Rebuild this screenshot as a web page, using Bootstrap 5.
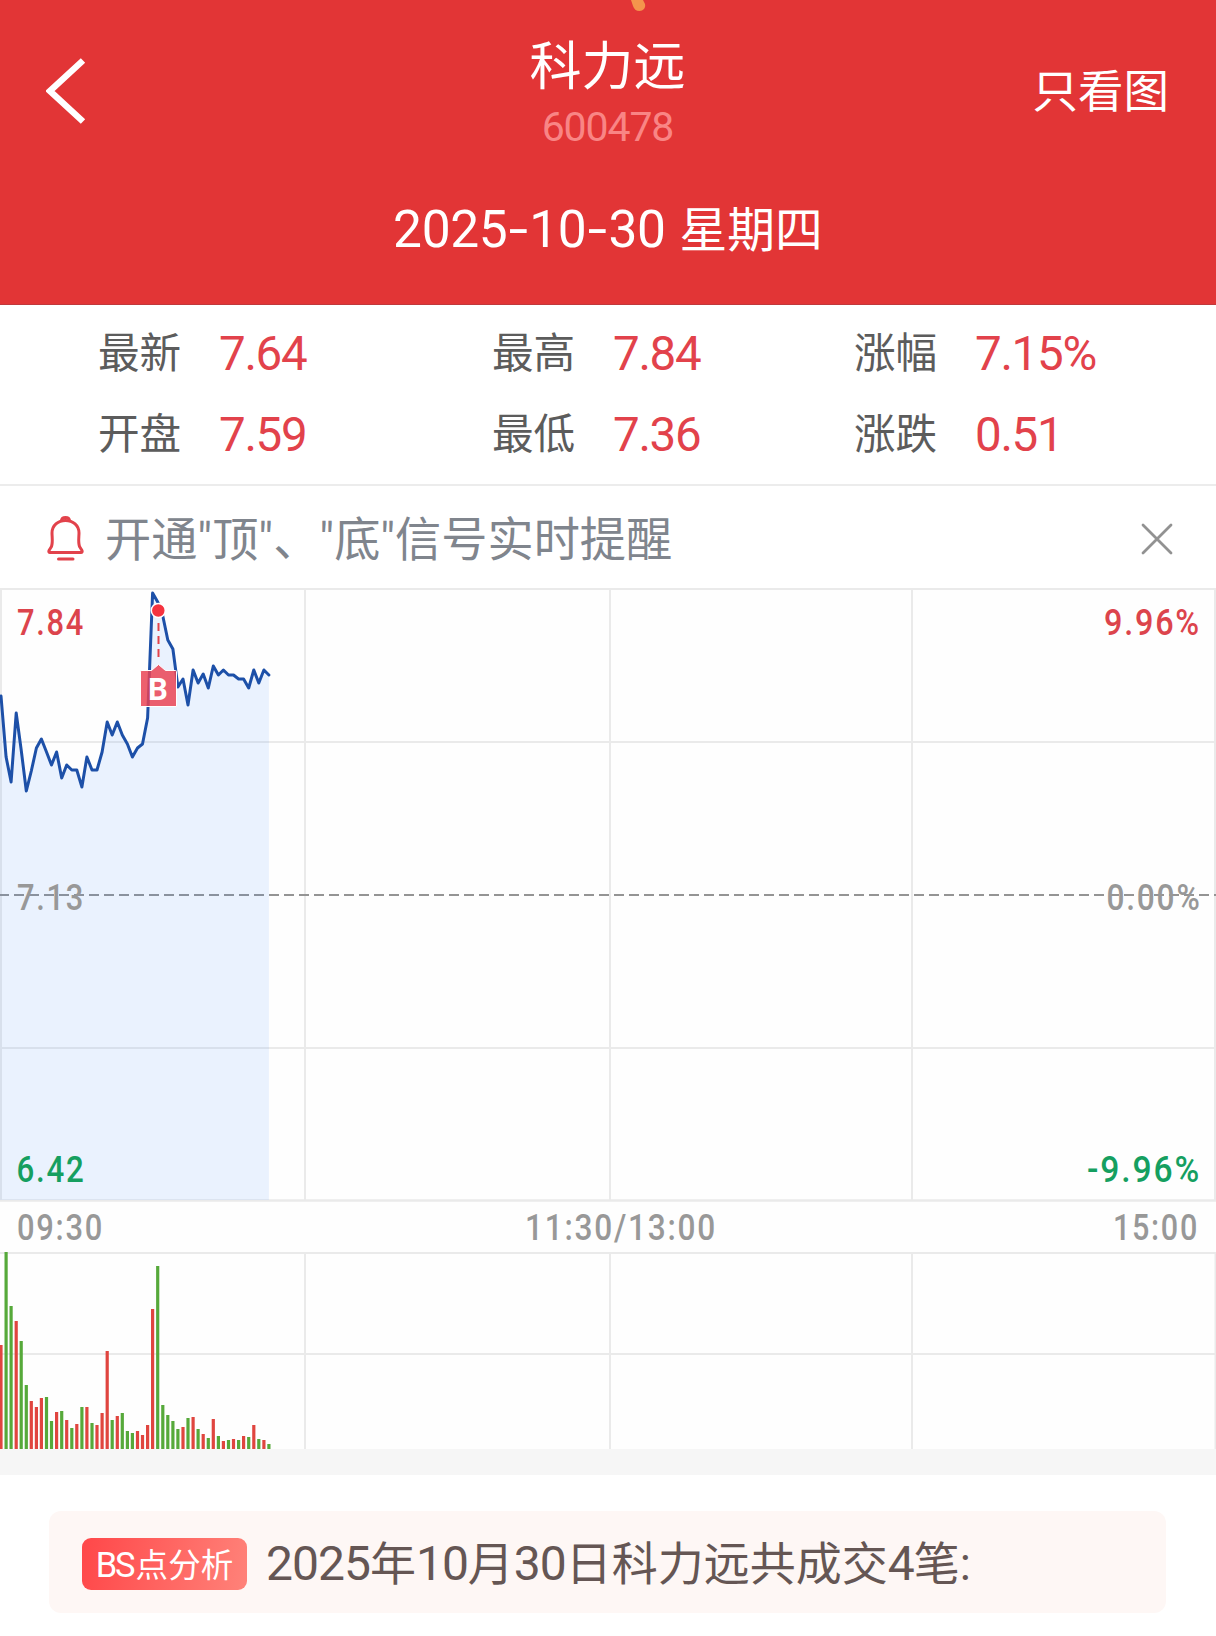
<!DOCTYPE html>
<html lang="zh-CN">
<head>
<meta charset="utf-8">
<meta name="viewport" content="width=device-width, initial-scale=1">
<title>科力远 600478</title>
<link href="https://cdn.jsdelivr.net/npm/bootstrap@5.3.0/dist/css/bootstrap.min.css" rel="stylesheet">
<style>
  body { font-family: Roboto, "Noto Sans CJK SC", sans-serif; background: #fff; overflow-x: hidden; }
  .app-head { background: #e23536; height: 305px; color: #fff; border-bottom: 1px solid #c0393c; }
  .head-top { height: 172px; padding: 0 47px 0 46px; }
  .head-side { width: 240px; height: 182px; }
  .stock-name { font-size: 52px; line-height: 60px; padding-top: 38px; }
  .stock-code { font-size: 41px; line-height: 48px; letter-spacing: -1.1px; color: #f98585; margin-top: 5px; }
  .only-chart { font-size: 45.5px; line-height: 60px; padding-top: 4px; }
  .trade-date { font-size: 51.5px; line-height: 60px; padding-top: 28px; }
  .trade-date .day-num { letter-spacing: -.4px; }
  .trade-date .dash { display: inline-block; width: 22px; text-align: center; transform: scaleX(1.35); }
  .trade-date .weekday { font-size: 47.8px; margin-left: 14px; }
  .drop { top: 0; left: 631px; }
  .quotes { height: 181px; padding: 9px 0 0 98px; border-bottom: 2px solid #ececec; }
  .quotes .q-line { height: 81px; }
  .q-cell { width: 394px; }
  .q-cell.second { width: 362px; }
  .q-label { font-size: 41.6px; width: 121px; color: #5c5c5c; line-height: 81px; margin-top: -1px; }
  .q-value { font-size: 47.5px; color: #e2424b; line-height: 81px; letter-spacing: -1.3px; }
  .notice { height: 102px; padding: 3px 43px 0 47px; color: #80858d; }
  .notice .msg { font-size: 46.2px; line-height: 60px; padding: 3px 0 0 20px; white-space: nowrap; }
  .chart { display: block; }
  .chart text { font-family: Roboto, sans-serif; font-size: 36px; font-weight: 500; letter-spacing: 2px; }
  .chart .flag { font-size: 31px; font-weight: 700; letter-spacing: 0; }
  .band { height: 26px; background: #f6f6f6; }
  .analysis { margin: 36px 50px 0 49px; height: 102px; border-radius: 12px; background: #fef7f5; padding: 4px 0 0 33px; }
  .bs-tag { width: 165px; height: 52px; border-radius: 9px; background: linear-gradient(100deg, #ff4749, #ff8279); color: #fff; font-size: 32.6px; line-height: 54px; }
  .bs-tag .lat { font-size: 34.5px; letter-spacing: -2px; margin-right: 2px; }
  .summary { font-size: 46px; line-height: 60px; color: #655654; padding-left: 19px; white-space: nowrap; }
  .summary .num { font-size: 48px; letter-spacing: -1px; }
</style>
</head>
<body>
<header class="app-head position-relative">
  <svg class="drop position-absolute" width="15" height="12" viewBox="0 0 15 12"><path d="M0 0H12L14 4C15 8 12 11 8.500 11C5 11 3 9 2 6Z" fill="#f4944c"/></svg>
  <div class="head-top d-flex justify-content-between">
    <div class="head-side d-flex align-items-center">
      <svg width="40" height="68" viewBox="0 0 40 68"><path d="M37 3.500L4 34L37 64.500" fill="none" stroke="#fff" stroke-width="6.400"/></svg>
    </div>
    <div class="text-center">
      <div class="stock-name">科力远</div>
      <div class="stock-code">600478</div>
    </div>
    <div class="head-side d-flex align-items-center justify-content-end only-chart">只看图</div>
  </div>
  <div class="trade-date text-center"><span class="day-num">2025<span class="dash">-</span>10<span class="dash">-</span>30</span><span class="weekday">星期四</span></div>
</header>

<section class="quotes">
  <div class="q-line d-flex">
    <div class="q-cell d-flex"><span class="q-label">最新</span><span class="q-value">7.64</span></div>
    <div class="q-cell second d-flex"><span class="q-label">最高</span><span class="q-value">7.84</span></div>
    <div class="d-flex"><span class="q-label">涨幅</span><span class="q-value">7.15%</span></div>
  </div>
  <div class="q-line d-flex">
    <div class="q-cell d-flex"><span class="q-label">开盘</span><span class="q-value">7.59</span></div>
    <div class="q-cell second d-flex"><span class="q-label">最低</span><span class="q-value">7.36</span></div>
    <div class="d-flex"><span class="q-label">涨跌</span><span class="q-value">0.51</span></div>
  </div>
</section>

<section class="notice d-flex align-items-center">
  <svg width="38" height="48" viewBox="0 0 38 48" fill="none" stroke="#e2424b" stroke-width="3" stroke-linejoin="round" stroke-linecap="round">
    <path d="M4.500 31.500C6 27 5 22 5 18C5 10.500 11 5.500 18.500 5.500S32 10.500 32 18C32 22 31 27 32.500 31.500L35 35.500C35.500 37 35 37.500 34 37.500H3C2 37.500 1.500 37 2 35.500Z"/>
    <path d="M14.500 5.500C15 1.500 22 1.500 22.500 5.500M11.500 44H26"/>
  </svg>
  <div class="msg">开通"顶"、"底"信号实时提醒</div>
  <svg class="ms-auto" width="32" height="32" viewBox="0 0 32 32"><path d="M2 2L30 30M30 2L2 30" stroke="#929292" stroke-width="2.800" stroke-linecap="round"/></svg>
</section>

<svg class="chart" width="1216" height="861" viewBox="0 588 1216 861">
  <rect y="588" width="1216" height="861" fill="#fefefe"/>
  <g stroke="#eaeaea" stroke-width="2">
    <path d="M0 589H1216M0 742H1216M0 1048H1216M0 1253H1216M0 1354H1216M1 588V1200M305 588V1200M610 588V1200M912 588V1200M1215 588V1200M305 1253V1449M610 1253V1449M912 1253V1449M1215.500 1253V1449"/>
    <path d="M0 1200.500H1216" stroke-width="2.600"/>
  </g>
  <path d="M0 895H1216" stroke="#949494" stroke-width="2" stroke-dasharray="10 5" stroke-dashoffset="1"/>
  <path id="area" fill="#3d88ff" fill-opacity=".1"/>
  <path id="price" fill="none" stroke="#1d50a8" stroke-width="3" stroke-linejoin="round" stroke-linecap="round"/>
  <path d="M158.500 623V661" stroke="#e2424b" stroke-width="2" stroke-dasharray="8 5"/>
  <circle cx="158.300" cy="610.500" r="7" fill="#f5333f" stroke="#fff" stroke-width="1.500"/>
  <path d="M142 670.500H151.500L158.500 664.500L165.500 670.500H175.500Q176.500 670.500 176.500 671.500V706.500H140.500V671.500Q140.500 670.500 142 670.500Z" fill="#ea4252" fill-opacity=".84" stroke="#fff" stroke-width="1"/>
  <text class="flag" x="158" y="700" text-anchor="middle" fill="#fff">B</text>
  <g fill="#dc444c"><text x="17" y="635" textLength="68" lengthAdjust="spacingAndGlyphs">7.84</text><text x="1104" y="635" textLength="97" lengthAdjust="spacingAndGlyphs">9.96%</text></g>
  <g fill="#989898">
    <text x="17" y="910" textLength="68" lengthAdjust="spacingAndGlyphs">7.13</text><text x="1106.500" y="910" textLength="95" lengthAdjust="spacingAndGlyphs">0.00%</text>
    <text x="17" y="1240" textLength="87" lengthAdjust="spacingAndGlyphs">09:30</text><text x="525" y="1240" textLength="192" lengthAdjust="spacingAndGlyphs">11:30/13:00</text><text x="1113" y="1240" textLength="86" lengthAdjust="spacingAndGlyphs">15:00</text>
  </g>
  <g fill="#159f60"><text x="16.500" y="1182" textLength="69" lengthAdjust="spacingAndGlyphs">6.42</text><text x="1087" y="1182" textLength="114" lengthAdjust="spacingAndGlyphs">-9.96%</text></g>
  <g id="volume" stroke-width="3.200"></g>
</svg>

<div class="band"></div>

<section class="analysis d-flex align-items-center">
  <div class="bs-tag text-center text-nowrap"><span class="lat">BS</span>点分析</div>
  <div class="summary"><span class="num">2025</span>年<span class="num">10</span>月<span class="num">30</span>日科力远共成交<span class="num">4</span>笔:</div>
</section>

<script src="https://cdn.jsdelivr.net/npm/bootstrap@5.3.0/dist/js/bootstrap.bundle.min.js"></script>
<script>
  // One sample per plotted minute step: chart y of the price, then volume height with direction.
  const step = 5.055;
  const price = [696,757,782,713,750,791,771,748,739,752,765,752,778,765,770,770,787,757,770,770,752,722,735,722,735,744,757,748,744,718,
    593,602,616,640,649,687,679,705,670,683,674,688,666,675,670,675,675,679,679,688,670,683,670,675];
  const vol = "104r 197g 143g 128r 108g 64g 48r 42r 51r 52g 28g 37r 38g 29r 21g 25r 42g 42r 26g 24r 36r 98r 29g 33r 36g 18g 16g 18r 14r 24r 140r 183g 44g 34g 28g 20g 22r 31g 32r 20g 15r 11g 30r 13g 8r 9g 10r 9g 13r 12g 24r 10g 9r 5g".split(" ");
  const line = price.map((y, i) => (1 + i * step).toFixed(1) + " " + y).join("L");
  document.getElementById("price").setAttribute("d", "M" + line);
  document.getElementById("area").setAttribute("d", "M0 1200V695L" + line + "V1200Z");
  document.getElementById("volume").innerHTML = vol.map((v, i) =>
    `<path d="M${(1 + i * step).toFixed(1)} 1449v-${parseInt(v)}" stroke="${v.endsWith("r") ? "#e0453f" : "#56a93a"}"/>`).join("");
</script>
</body>
</html>
